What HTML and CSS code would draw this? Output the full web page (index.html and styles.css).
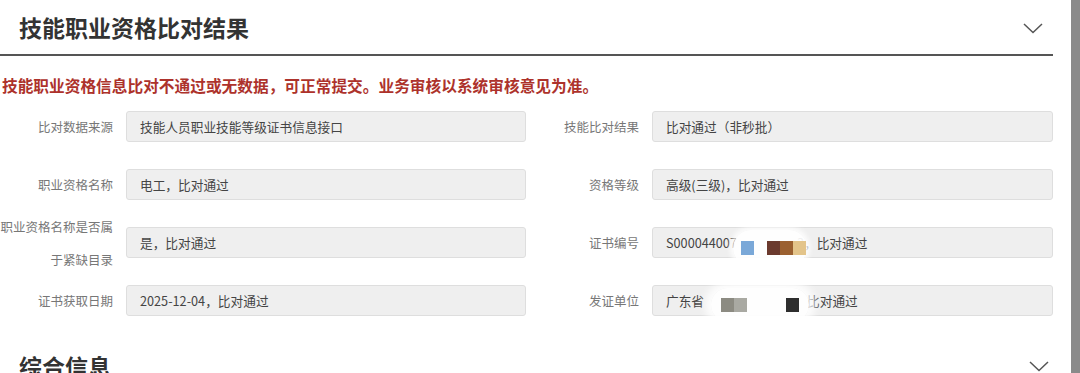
FILE: index.html
```html
<!DOCTYPE html>
<html lang="zh-CN">
<head>
  <meta charset="UTF-8" />
  <meta name="viewport" content="width=device-width, initial-scale=1.0"/>
  <title>技能职业资格比对结果</title>
  <link rel="stylesheet" href="styles.css">
</head>
<body>

  <div class="page">
    <div class="panel">
      <div class="panel-head">
        <h2>技能职业资格比对结果</h2>
        <svg class="chevron" viewBox="0 0 20 11" width="20" height="11"><path d="M1 1 L10 9.5 L19 1" fill="none" stroke="#555" stroke-width="1.5"/></svg>
      </div>

      <p class="notice">技能职业资格信息比对不通过或无数据，可正常提交。业务审核以系统审核意见为准。</p>

      <div class="form">
        <div class="field">
          <label>比对数据来源</label>
          <div class="value">技能人员职业技能等级证书信息接口</div>
        </div>
        <div class="field">
          <label>技能比对结果</label>
          <div class="value">比对通过（非秒批）</div>
        </div>

        <div class="field">
          <label>职业资格名称</label>
          <div class="value">电工，比对通过</div>
        </div>
        <div class="field">
          <label>资格等级</label>
          <div class="value">高级(三级)，比对通过</div>
        </div>

        <div class="field">
          <label class="tall">职业资格名称是否属<br>于紧缺目录</label>
          <div class="value">是，比对通过</div>
        </div>
        <div class="field">
          <label>证书编号</label>
          <div class="value">
            S000044007<span class="gap-a"></span>3，比对通过
            <span class="blur blur-a">
              <i class="px" style="background:#7aa8d8"></i><i class="px off"></i><i class="px" style="background:#6b3a2e"></i><i class="px" style="background:#9b6030"></i><i class="px" style="background:#e3c48a"></i>
            </span>
          </div>
        </div>

        <div class="field">
          <label>证书获取日期</label>
          <div class="value">2025-12-04，比对通过</div>
        </div>
        <div class="field">
          <label>发证单位</label>
          <div class="value">
            广东省<span class="gap-b"></span>比对通过
            <span class="blur blur-b">
              <i class="px" style="background:#8c8b82"></i><i class="px" style="background:#a9a9a2"></i><i class="px off"></i><i class="px off"></i><i class="px off"></i><i class="px" style="background:#2e2e2e"></i>
            </span>
          </div>
        </div>
      </div>
    </div>

    <div class="panel-head next">
      <h2>综合信息</h2>
      <svg class="chevron" viewBox="0 0 20 11" width="20" height="11"><path d="M1 1 L10 9.5 L19 1" fill="none" stroke="#555" stroke-width="1.5"/></svg>
    </div>
  </div>

  <div class="scrollbar"></div>

</body>
</html>
```

FILE: styles.css
```css
body {
  margin: 0;
  background-color: white;
  font-family: "Noto Sans CJK SC", "Liberation Sans", sans-serif;
  color: #333;
  overflow: hidden;
}

.page {
  width: 1053px;
}

.panel-head {
  display: flex;
  justify-content: space-between;
  align-items: center;
  height: 54px;
  padding: 0 10px 0 19px;
  border-bottom: 2px solid #555;
}

.panel-head h2 {
  margin: 0;
  font-size: 23px;
  font-weight: bold;
  color: #333;
  letter-spacing: 0;
}

.chevron {
  margin-top: 2px;
}

.panel-head.next {
  border-bottom: none;
  margin-top: 29px;
  height: 40px;
  align-items: flex-start;
  padding-top: 4px;
}

.panel-head.next .chevron {
  margin-top: 12px;
  margin-right: -6px;
}

.notice {
  margin: 0;
  padding: 15px 0 0 2px;
  height: 40px;
  box-sizing: border-box;
  font-size: 15.7px;
  line-height: 30px;
  font-weight: bold;
  color: #ad322b;
  white-space: nowrap;
}

.form {
  display: grid;
  grid-template-columns: 526px 527px;
  row-gap: 27px;
  margin-top: 15px;
}

.field {
  display: flex;
  align-items: center;
  height: 31px;
}

.field label {
  width: 113px;
  flex-shrink: 0;
  text-align: right;
  font-size: 12.5px;
  color: #777;
  margin-right: 13px;
  white-space: nowrap;
}

.field label.tall {
  line-height: 33px;
  margin-top: 1px;
}

.value {
  position: relative;
  flex: 1;
  height: 31px;
  box-sizing: border-box;
  padding: 0 13px;
  background-color: #efefef;
  border: 1px solid #dedede;
  border-radius: 3px;
  font-size: 12.7px;
  line-height: 29px;
  color: #444;
  white-space: nowrap;
}

.gap-a {
  display: inline-block;
  width: 60px;
}

.gap-b {
  display: inline-block;
  width: 103px;
}

.blur {
  position: absolute;
  display: flex;
  align-items: center;
  background: rgba(255, 255, 255, 0.92);
  border-radius: 18px;
  box-shadow: 0 0 8px 6px rgba(255, 255, 255, 0.9);
}

.blur-a {
  left: 80px;
  top: 2px;
  height: 36px;
  padding: 0 1px 0 8px;
  box-shadow: 0 0 5px 3px rgba(255, 255, 255, 0.85);
}

.blur-b {
  left: 58px;
  top: 2px;
  height: 34px;
  padding: 0 10px;
}

.px {
  display: block;
  width: 13px;
  height: 14px;
}

.px.off {
  background: transparent;
}

.scrollbar {
  position: fixed;
  top: 0;
  right: 0;
  width: 9px;
  height: 100%;
  background-color: #8a8a8a;
}
```
